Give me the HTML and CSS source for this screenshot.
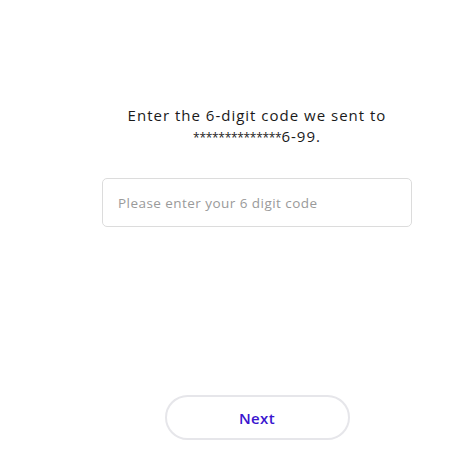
FILE: index.html
```html
<!DOCTYPE html>
<html lang="en">
<head>
    <meta charset="UTF-8">
    <meta name="viewport" content="width=device-width, initial-scale=1.0">
    <title>Verify code</title>
    <link rel="stylesheet" href="styles.css">
</head>
<body>

    <div class="container">
        <p class="prompt">Enter the 6-digit code we sent to<br><span class="mask">**************</span>6-99.</p>

        <input class="code-input" type="text" placeholder="Please enter your 6 digit code">

        <div class="actions">
            <button class="next-btn">Next</button>
        </div>
    </div>

</body>
</html>
```

FILE: styles.css
```css
* {
    margin: 0;
    padding: 0;
    box-sizing: border-box;
    font-family: 'Open Sans', 'DejaVu Sans', sans-serif;
}

body {
    background-color: #fff;
    color: #111;
}

.container {
    width: 310px;
    margin-left: 102px;
    padding-top: 105px;
    display: flex;
    flex-direction: column;
}

.prompt {
    text-align: center;
    font-size: 15px;
    line-height: 21px;
    letter-spacing: 1px;
    color: #1a1a1a;
}

.prompt .mask {
    font-size: 12px;
    letter-spacing: -0.3px;
}

.code-input {
    margin-top: 30px;
    height: 49px;
    width: 100%;
    border: 1px solid #dcdcdc;
    border-radius: 5px;
    padding: 0 15px;
    font-size: 13.5px;
    letter-spacing: 0.45px;
    color: #333;
    outline: none;
}

.code-input::placeholder {
    color: #9a9a9a;
}

.actions {
    display: flex;
    justify-content: center;
    margin-top: 168px;
}

.next-btn {
    width: 185px;
    height: 45px;
    border: 2px solid #e6e6ea;
    border-radius: 23px;
    background-color: #fff;
    color: #3a14cf;
    font-size: 15px;
    font-weight: 600;
    letter-spacing: 0.4px;
    cursor: pointer;
}
```
